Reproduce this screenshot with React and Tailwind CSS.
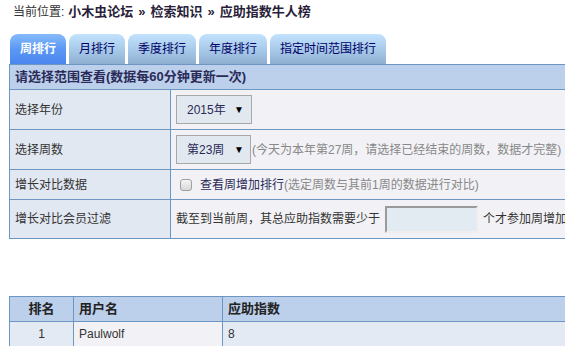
export default function App() {
  const tabs = ["月排行", "季度排行", "年度排行", "指定时间范围排行"];
  const B = "border-[#6d96c3]";
  return (
    <div className="w-[565px] h-[346px] overflow-hidden bg-white text-[12px] text-[#333] whitespace-nowrap font-['Liberation_Sans','Noto_Sans_CJK_SC',sans-serif]">
      <div className="h-[34px] pl-[13px] pt-[3px] leading-[18px] flex items-start">
        <span>当前位置:</span>
        <b className="ml-[4px] text-[13px] text-[#2a1f3a]">
          小木虫论坛<span className="mx-[5px]">»</span>检索知识<span className="mx-[5px]">»</span>应助指数牛人榜
        </b>
      </div>
      <div className="flex gap-[3px] pl-[10px] h-[30px]">
        <div className="rounded-t-[8px] px-[10px] leading-[30px] bg-linear-to-b from-[#86bbfa] via-[#5b98f5] to-[#4a86ef] text-white font-bold">周排行</div>
        {tabs.map((t) => (
          <div key={t} className="rounded-t-[8px] px-[10px] leading-[30px] bg-linear-to-b from-[#c2e2fd] via-[#a9cbea] to-[#8fafd1] text-[#000066]">{t}</div>
        ))}
      </div>
      <div className={`ml-[9px] w-[660px] border ${B}`}>
        <div className="h-[24px] leading-[24px] bg-[#bccfeb] font-bold text-[13px] px-[5px] text-[#2b2b58]">请选择范围查看(数据每60分钟更新一次)</div>
        <div className={`flex h-[40px] border-t ${B}`}>
          <div className={`w-[161px] bg-[#e2e8f2] border-r ${B} pl-[5px] flex items-center`}>选择年份</div>
          <div className="flex-1 bg-[#f2f2f6] flex items-center pl-[5px]">
            <div className="w-[76px] h-[29px] border border-[#a8a8a8] bg-[#e1e8f0] flex items-center justify-between pl-[10px] pr-[7px] text-[#2a2a55]">
              <span>2015年</span><span className="text-[10px] text-black">▼</span>
            </div>
          </div>
        </div>
        <div className={`flex h-[40px] border-t ${B}`}>
          <div className={`w-[161px] bg-[#e2e8f2] border-r ${B} pl-[5px] flex items-center`}>选择周数</div>
          <div className="flex-1 bg-[#f2f2f6] flex items-center pl-[5px]">
            <div className="w-[75px] h-[29px] border border-[#a8a8a8] bg-[#e1e8f0] flex items-center justify-between pl-[10px] pr-[6px] text-[#2a2a55]">
              <span>第23周</span><span className="text-[10px] text-black">▼</span>
            </div>
            <span className="text-[#888] ml-[1px]">(今天为本年第27周，请选择已经结束的周数，数据才完整)</span>
          </div>
        </div>
        <div className={`flex h-[30px] border-t ${B}`}>
          <div className={`w-[161px] bg-[#e2e8f2] border-r ${B} pl-[5px] flex items-center`}>增长对比数据</div>
          <div className="flex-1 bg-[#f2f2f6] flex items-center pl-[9px]">
            <span className="w-[12px] h-[12px] rounded-[3px] border border-[#a0a0a0] bg-linear-to-b from-[#f4f4f4] to-[#d8d8d8]"></span>
            <span className="ml-[8px] text-[#2b2b58]">查看周增加排行</span>
            <span className="text-[#888]">(选定周数与其前1周的数据进行对比)</span>
          </div>
        </div>
        <div className={`flex h-[39px] border-t ${B}`}>
          <div className={`w-[161px] bg-[#e2e8f2] border-r ${B} pl-[5px] flex items-center`}>增长对比会员过滤</div>
          <div className="flex-1 bg-[#f2f2f6] flex items-center pl-[5px]">
            <span>截至到当前周，其总应助指数需要少于</span>
            <span className="ml-[5px] w-[93px] h-[27px] border-2 border-t-[#9a9a9a] border-l-[#9a9a9a] border-b-[#eeeeee] border-r-[#eeeeee] bg-[#e2eaf2]"></span>
            <span className="ml-[5px]">个才参加周增加排行</span>
          </div>
        </div>
      </div>
      <div className={`mt-[57px] ml-[9px] w-[660px] border ${B}`}>
        <div className="flex h-[24px] bg-[#bccfeb] font-bold text-[13px] text-[#222]">
          <div className={`w-[64px] border-r ${B} text-center leading-[24px]`}>排名</div>
          <div className={`w-[149px] border-r ${B} pl-[5px] leading-[24px]`}>用户名</div>
          <div className="flex-1 pl-[5px] leading-[24px]">应助指数</div>
        </div>
        <div className={`flex h-[25px] border-t ${B}`}>
          <div className={`w-[64px] border-r ${B} bg-[#e4eaf3] text-center leading-[24px]`}>1</div>
          <div className={`w-[149px] border-r ${B} bg-[#f2f2f6] pl-[5px] leading-[24px]`}>Paulwolf</div>
          <div className="flex-1 bg-[#e4eaf3] pl-[5px] leading-[24px]">8</div>
        </div>
      </div>
    </div>
  );
}
